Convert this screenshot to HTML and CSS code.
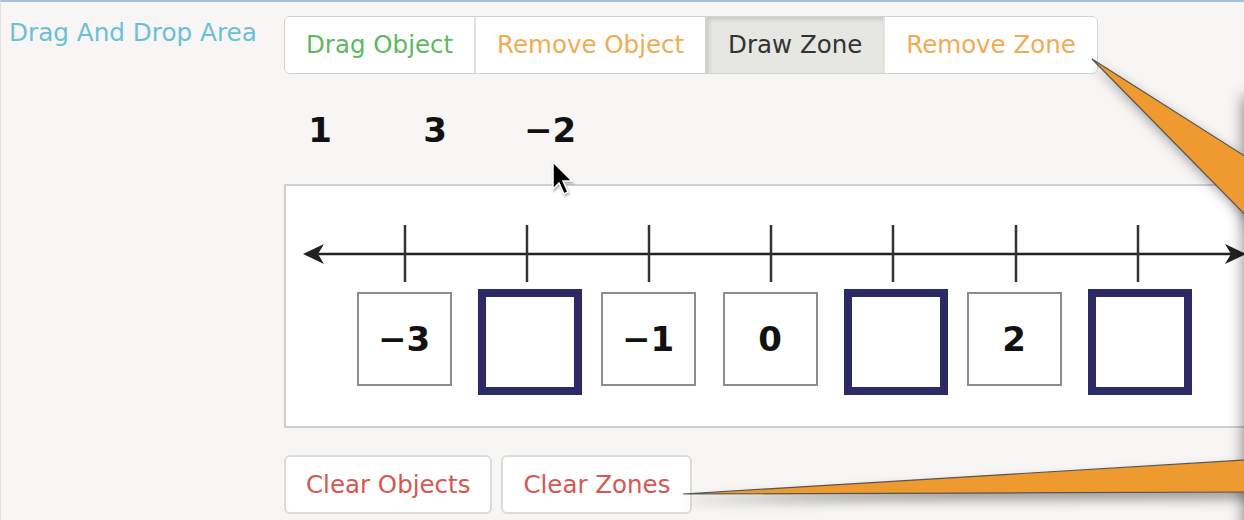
FILE: index.html
```html
<!DOCTYPE html>
<html lang="en">
<head>
    <meta charset="UTF-8">
    <meta name="viewport" content="width=device-width, initial-scale=1.0">
    <title>Drag And Drop Area</title>
    <link rel="stylesheet" href="styles.css">
</head>
<body>
    <div class="page">
        <div class="field-label">Drag And Drop Area</div>

        <div class="field-body">
            <div class="btn-group">
                <button class="btn text-success">Drag Object</button>
                <button class="btn text-warning">Remove Object</button>
                <button class="btn active">Draw Zone</button>
                <button class="btn text-warning">Remove Zone</button>
            </div>

            <div class="palette">
                <span class="obj">1</span>
                <span class="obj">3</span>
                <span class="obj">&minus;2</span>
            </div>

            <div class="canvas">
                <svg class="numline" width="1000" height="103" viewBox="0 0 1000 103">
                    <line x1="24" y1="68" x2="952" y2="68" stroke="#222" stroke-width="2.5"/>
                    <path d="M17 68 L38 58 L32 68 L38 78 Z" fill="#222"/>
                    <path d="M960 68 L939 58 L945 68 L939 78 Z" fill="#222"/>
                    <g stroke="#333" stroke-width="2.5">
                        <line x1="119" y1="39" x2="119" y2="96"/>
                        <line x1="241" y1="39" x2="241" y2="96"/>
                        <line x1="363" y1="39" x2="363" y2="96"/>
                        <line x1="485" y1="39" x2="485" y2="96"/>
                        <line x1="607" y1="39" x2="607" y2="96"/>
                        <line x1="730" y1="39" x2="730" y2="96"/>
                        <line x1="852" y1="39" x2="852" y2="96"/>
                    </g>
                </svg>
                <div class="slots">
                    <div class="slot"><div class="tile">&minus;3</div></div>
                    <div class="slot"><div class="zone"></div></div>
                    <div class="slot"><div class="tile">&minus;1</div></div>
                    <div class="slot"><div class="tile">0</div></div>
                    <div class="slot"><div class="zone"></div></div>
                    <div class="slot"><div class="tile">2</div></div>
                    <div class="slot"><div class="zone"></div></div>
                </div>
            </div>

            <div class="actions">
                <button class="btn btn-single text-danger">Clear Objects</button>
                <button class="btn btn-single text-danger">Clear Zones</button>
            </div>
        </div>
    </div>

    <!-- callout box sitting just off the right edge, only its shadow shows -->
    <div class="callout-card"></div>

    <svg class="overlay" width="1244" height="520" viewBox="0 0 1244 520">
        <g class="pointers">
            <polygon points="1092,59 1262,167 1262,232" fill="#ef9a2e" stroke="#555" stroke-width="1.2"/>
            <polygon points="683,494 1262,459 1262,492" fill="#ef9a2e" stroke="#555" stroke-width="1.2"/>
        </g>
        <path class="cursor" d="M553 162 L553 189 L559 183 L564 194 L568 192 L563 181 L572 181 Z"
              fill="#000" stroke="#fff" stroke-width="1.5"/>
    </svg>
</body>
</html>
```

FILE: styles.css
```css
html, body {
    margin: 0;
    height: 100%;
    overflow: hidden;
}
body {
    font-family: "DejaVu Sans", Verdana, sans-serif;
    background-color: #f7f6f5;
    border-top: 2px solid #aabfdc;
    border-left: 1px solid #e2e2e2;
    box-sizing: border-box;
}
.page {
    display: flex;
}
.field-label {
    width: 275px;
    padding: 16px 0 0 8px;
    font-size: 24.7px;
    line-height: 30px;
    color: #6cc0d6;
    flex-shrink: 0;
}
.field-body {
    display: flex;
    flex-direction: column;
    align-items: flex-start;
    padding-top: 14px;
}
.btn {
    font-family: "DejaVu Sans", Verdana, sans-serif;
    font-size: 24.5px;
    line-height: 28px;
    padding: 14px 21px;
    background: #fff;
    border: 1px solid #dcdcda;
    color: #333;
    cursor: pointer;
}
.btn-group {
    display: flex;
    border: 1px solid #d2d2cf;
    border-radius: 6px;
    overflow: hidden;
}
.btn-group .btn {
    border: none;
    border-left: 2px solid #e2e2df;
}
.btn-group .btn:first-child {
    border-left: none;
}
.btn.active {
    background: #e6e6e2;
    box-shadow: inset 2px 3px 4px rgba(0,0,0,0.12);
    border-left-color: #d0d0cc;
}
.text-success { color: #5db95d; }
.text-warning { color: #f0ac55; }
.text-danger { color: #d65751; }

.palette {
    display: flex;
    gap: 43px;
    margin-top: 36px;
    height: 40px;
}
.obj {
    width: 72px;
    text-align: center;
    font-weight: bold;
    font-size: 34px;
    line-height: 40px;
    color: #111;
}

.canvas {
    margin-top: 34px;
    width: 1000px;
    height: 240px;
    background: #fff;
    border: 2px solid #cfcfcf;
}
.numline {
    display: block;
}
.slots {
    display: flex;
    align-items: center;
    height: 106px;
    padding-left: 57px;
}
.slot {
    width: 122px;
    display: flex;
    justify-content: center;
}
.tile {
    width: 91px;
    height: 90px;
    border: 2px solid #8c8c8c;
    display: flex;
    align-items: center;
    justify-content: center;
    font-weight: bold;
    font-size: 34px;
    color: #111;
    margin-top: -6px;
}
.zone {
    width: 88px;
    height: 90px;
    border: 8px solid #2b2a66;
    margin-left: 8px;
}

.actions {
    display: flex;
    gap: 9px;
    margin-top: 27px;
}
.btn-single {
    border: 2px solid #dcdcda;
    border-radius: 6px;
    padding: 14px 20px 13px;
}

.callout-card {
    position: absolute;
    left: 1246px;
    top: 96px;
    width: 300px;
    height: 600px;
    background: #fff;
    box-shadow: -3px 0 14px rgba(0,0,0,0.45);
}
.overlay {
    position: absolute;
    left: 0;
    top: 0;
    pointer-events: none;
}
.pointers {
    filter: drop-shadow(4px 7px 6px rgba(0,0,0,0.35));
}
.cursor {
    filter: drop-shadow(1px 2px 1px rgba(0,0,0,0.3));
}
```
